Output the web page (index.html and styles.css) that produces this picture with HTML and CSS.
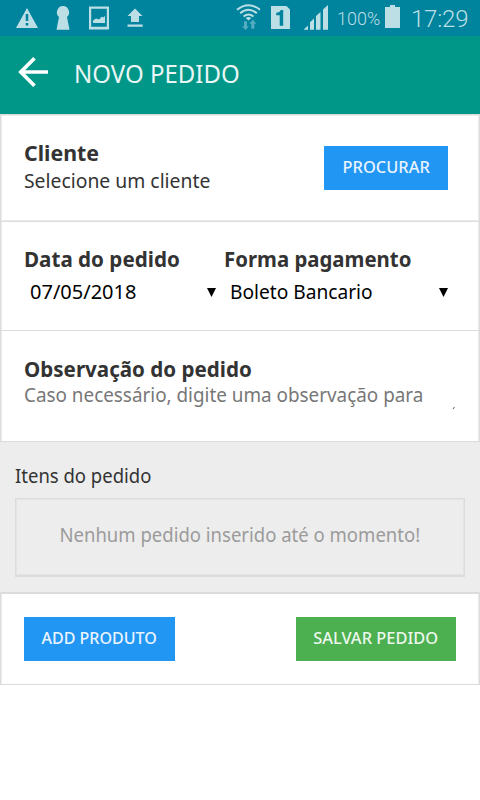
FILE: index.html
```html
<!DOCTYPE html>
<html lang="pt-BR">
<head>
<meta charset="utf-8">
<title>Novo pedido</title>
<link rel="stylesheet" href="styles.css">
</head>
<body>
<div class="status">
  <svg class="status-left" width="240" height="36" viewBox="0 0 240 36" fill="#bcdfe6">
    <path fill-rule="evenodd" d="M27 8 38 28H16ZM25.700 14v7h2.600v-7ZM25.700 23v2.400h2.600V23Z"/>
    <path d="M63 6a6.300 6.300 0 0 0-4 11L56.500 29.800h13L67 17A6.300 6.300 0 0 0 63 6Z"/>
    <path fill-rule="evenodd" d="M89 6.500h20v23H89ZM91.200 8.700v18h15.600v-18Z"/>
    <path d="M93 23v-2.500l3-2 3 1 3-3 1 1 2-1.500v7Z"/>
    <path d="m135 8.500 7.500 7.500H139v6h-8v-6h-3.500ZM127.500 24.500h15.200v2.300h-15.200Z"/>
  </svg>
  <svg class="status-right" width="100" height="36" viewBox="234 0 100 36" fill="#bcdfe6">
    <g fill="none" stroke="#bcdfe6" stroke-width="2"><path d="M237 9.700q11.500-9 23 0M240.200 13.200q8.300-7 16.600 0M243.500 16.500q5-4 10 0"/></g>
    <path d="m248.500 20.500-2.800-2.500q2.800-2 5.600 0Z"/>
    <path fill="#54acc0" d="M244 21.200h3v5h2L245.500 30l-3.500-3.800h2ZM251.300 28.700v-5h-2l3.500-4 3.500 4h-2v5Z"/>
    <path fill-rule="evenodd" d="M271 6h15.500l3.500 3.500V29H271ZM280.700 10c-.7 2-2 2.700-4.500 2.800v2.400h3.500V25.700h3.500V10Z"/>
    <path d="m303.500 29.800 4.500-4.300v4.300ZM310 29.800v-7.500l4-3.800v11.300ZM316 29.800V16l4.500-4v17.800ZM323 29.800V9.500L328 5v24.800Z"/>
  </svg>
  <span class="percent">100%</span>
  <svg class="battery" width="16" height="24" viewBox="0 0 16 24"><path fill="#bcdfe6" d="M0 3h5V1h5v2h5v21H0Z"/></svg>
  <span class="clock">17:29</span>
</div>
<header class="toolbar">
  <svg width="32" height="32" viewBox="0 0 32 32" fill="none" stroke="#fff" stroke-width="3.700"><path d="M31 16H4M17.500 2.300 3.800 16l13.700 13.700"/></svg>
  <h1><span class="t-title">NOVO PEDIDO</span></h1>
</header>
<main>
  <section class="card client">
    <div>
      <h2><span class="t-client">Cliente</span></h2>
      <p><span class="t-select">Selecione um cliente</span></p>
    </div>
    <button class="btn search"><span class="t-search">PROCURAR</span></button>
  </section>
  <section class="card fields">
    <div class="field date">
      <h2><span class="t-date">Data do pedido</span></h2>
      <div class="select"><span>07/05/2018</span><i class="caret"></i></div>
    </div>
    <div class="field payment">
      <h2><span class="t-pay">Forma pagamento</span></h2>
      <div class="select"><span class="t-method">Boleto Bancario</span><i class="caret"></i></div>
    </div>
  </section>
  <section class="card note">
    <h2><span class="t-note">Observação do pedido</span></h2>
    <div class="textarea"><span class="t-placeholder">Caso necessário, digite uma observação para</span>
      <svg width="4" height="4" viewBox="0 0 4 4"><path d="m1 3 1.500-2" stroke="#555"/></svg></div>
  </section>
  <section class="items">
    <p><span class="t-items">Itens do pedido</span></p>
    <div class="empty"><span class="t-empty">Nenhum pedido inserido até o momento!</span></div>
  </section>
  <section class="card actions">
    <button class="btn add"><span class="t-add">ADD PRODUTO</span></button>
    <button class="btn save"><span class="t-save">SALVAR PEDIDO</span></button>
  </section>
</main>
</body>
</html>
```
FILE: styles.css
```css
* { box-sizing: border-box; }
body { margin: 0; background: #fff; color: #333; font: 20px/26px "Noto Sans", sans-serif; }
h1, h2, p { margin: 0; white-space: nowrap; }
svg { display: block; flex: none; }
.status { display: flex; height: 36px; background: #00839d; color: #bcdfe6; font-family: Roboto, sans-serif; overflow: hidden; }
.status-left { margin-right: -6px; }
.percent { width: 48px; padding-left: 3px; font-size: 18px; line-height: 38px; font-weight: 350; }
.battery { margin: 4px 10px 0 3px; }
.clock { font-size: 24px; line-height: 38px; font-weight: 350; white-space: nowrap; letter-spacing: -.2px; }
.toolbar { display: flex; align-items: center; height: 78px; padding: 0 0 6px 17px; background: #009788; }
.toolbar h1 { margin-left: 25px; padding-top: 1px; color: #e9f6f5; font-size: 26px; line-height: 34px; font-weight: 400; }
h2 { font-size: 22px; line-height: 28px; font-weight: 700; }

/* condensed labels */
[class^="t-"] { display: inline-block; transform-origin: left; }
.t-title { transform: scaleX(.923); }
.t-client { transform: scaleX(.97); }
.t-select { transform: scaleX(.967); }
.t-date { transform: scaleX(.937); }
.t-pay { transform: scaleX(.926); }
.t-method { transform: scaleX(.957); }
.t-note { transform: scaleX(.935); }
.t-placeholder { transform: scaleX(.943); }
.t-items { transform: scaleX(.925); }
.btn .t-search { transform: scaleX(.965); transform-origin: center; }
.btn .t-add { transform: scaleX(.943); transform-origin: center; }
.btn .t-save { transform: scaleX(.966); transform-origin: center; }
.empty .t-empty { transform: scaleX(.926); transform-origin: center; }

.card { border: 1px solid #dcdcdc; border-top-width: 0; background: #fff; box-shadow: inset 1px 0 #ebebeb, inset -1px 0 #ebebeb; }
.client { display: flex; justify-content: space-between; height: 108px; border-top-width: 1px; padding: 23px 31px 0 23px; box-shadow: inset 0 0 0 1px #ebebeb; }
.client p { line-height: 28px; padding-top: 1px; }
.btn { flex: none; height: 44px; padding: 0; border: 0; color: #e9f4fe; background: #2196f3; font: 500 17px/42px "Noto Sans", sans-serif; white-space: nowrap; }
.btn span { position: relative; top: -1px; }
.search { width: 124px; margin-top: 8px; }
.fields { display: flex; height: 109px; padding: 22px 23px 0; }
.date { width: 200px; }
.payment { width: 232px; }
.select { display: flex; align-items: center; justify-content: space-between; height: 39px; padding: 0 8px 0 6px; color: #000; white-space: nowrap; }
.caret { width: 9px; height: 9px; margin-top: 2px; background: #000; clip-path: polygon(0 0, 100% 0, 50% 100%); }
.note { height: 111px; padding: 23px 23px 0; }
.textarea { display: flex; justify-content: space-between; height: 28px; color: #777; line-height: 26px; white-space: nowrap; }
.textarea svg { align-self: flex-end; }
.items { height: 150px; padding: 21px 15px 0; background: #ededed; }
.empty { height: 79px; margin-top: 9px; padding-top: 23px; border: 1px solid #dcdcdc; border-bottom-width: 2px; box-shadow: inset 0 0 0 1px #e4e4e4; color: #9b9b9b; text-align: center; white-space: nowrap; }
.actions { display: flex; justify-content: space-between; height: 93px; border-top-width: 2px; padding: 23px 23px 0; box-shadow: inset 1px 0 #ebebeb, inset -1px 0 #ebebeb, 0 1px #ebebeb; }
.add { width: 151px; }
.save { width: 160px; color: #edf7ee; background: #4caf50; }
```
